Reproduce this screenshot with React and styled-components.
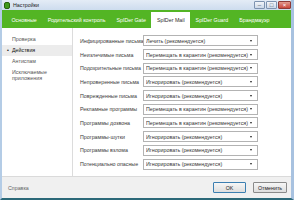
import React from "react";
import styled, { createGlobalStyle } from "styled-components";

const GlobalStyle = createGlobalStyle`
    html, body {
        margin: 0;
        padding: 0;
        background: #1f5c6e;
    }
    body {
        font-family: "Liberation Sans", Arial, sans-serif;
    }
`;

const FS = "5.3px";

const Window = styled.div`
    box-sizing: border-box;
    width: 294px;
    height: 200px;
    display: flex;
    flex-direction: column;
    background: #c4d7ec;
    border-left: 2px solid #b4cce6;
    border-right: 3px solid #a8c2e0;
    border-bottom: 2px solid #2b6878;
    overflow: hidden;
`;

const TitleBar = styled.div`
    height: 10px;
    display: flex;
    align-items: center;
    background: linear-gradient(#e4ecf6, #cddcee);
    padding-left: 2px;
    font-size: ${FS};
    color: #1a1a1a;

    .title {
        margin-left: 3px;
        flex: 1;
    }
`;

const AppIcon = styled.div`
    width: 6px;
    height: 7px;
    border-radius: 2px;
    background: #3f9a1c;
    border: 1px solid #27620f;
    box-sizing: border-box;
`;

const WinButtons = styled.div`
    display: flex;
    gap: 1px;
    align-self: flex-start;
    margin-top: 1px;
`;

const WinBtn = styled.div`
    width: ${(p) => (p.$close ? "13px" : "11px")};
    height: 8px;
    box-sizing: border-box;
    border: 1px solid ${(p) => (p.$close ? "#8e3a36" : "#7d93b0")};
    border-radius: 1px;
    background: ${(p) => (p.$close ? "linear-gradient(#e39b8f, #c9463b)" : "linear-gradient(#f2f5f9, #ccd8e8)")};
    display: flex;
    align-items: center;
    justify-content: center;
    color: ${(p) => (p.$close ? "#fff" : "#3a4a60")};
    font-size: 6px;
    line-height: 1;
`;

const TabBar = styled.div`
    height: 18px;
    display: flex;
    align-items: flex-end;
    background: #53b524;
    padding-left: 4px;
`;

const Tab = styled.div`
    height: 16px;
    display: flex;
    align-items: center;
    padding: 0 5.5px;
    font-size: ${FS};
    color: ${(p) => (p.$active ? "#2c2c2c" : "#ffffff")};
    background: ${(p) => (p.$active ? "#ffffff" : "transparent")};
    white-space: nowrap;
`;

const Body = styled.div`
    flex: 1;
    display: flex;
    background: #ffffff;
    border-bottom: 1px solid #dadada;
    min-height: 0;
`;

const Sidebar = styled.div`
    width: 70px;
    border-right: 1px solid #dcdcdc;
    padding-top: 6px;
    display: flex;
    flex-direction: column;
`;

const NavItem = styled.div`
    position: relative;
    font-size: ${FS};
    line-height: 5.6px;
    padding: 2.8px 4px 2.8px 10px;
    color: ${(p) => (p.$active ? "#111" : "#555")};
    background: ${(p) => (p.$active ? "#ececec" : "transparent")};

    &::before {
        content: "${(p) => (p.$active ? "•" : "")}";
        position: absolute;
        left: 5px;
        top: 2.8px;
        color: #111;
    }
`;

const Main = styled.div`
    flex: 1;
    padding: 6px 0 0 7px;
    display: flex;
    flex-direction: column;
`;

const Row = styled.div`
    height: 13.7px;
    display: flex;
    align-items: center;
`;

const Label = styled.div`
    width: 63px;
    font-size: ${FS};
    color: #3a3a3a;
    white-space: nowrap;
`;

const Select = styled.div`
    box-sizing: border-box;
    width: 115px;
    height: 11px;
    border: 1px solid #b3b3b3;
    background: #ffffff;
    display: flex;
    align-items: center;
    padding: 0 2px;
    font-size: ${FS};
    color: #333;
    white-space: nowrap;

    .val {
        flex: 1;
        overflow: hidden;
    }
`;

const Arrow = styled.div`
    width: 0;
    height: 0;
    margin-right: 3px;
    border-left: 1.5px solid transparent;
    border-right: 1.5px solid transparent;
    border-top: 2px solid #222;
`;

const Footer = styled.div`
    height: 21px;
    display: flex;
    align-items: center;
    background: #f0f0f0;
    padding: 0 4px 0 6px;
    font-size: ${FS};
    color: #666;

    .help {
        flex: 1;
    }
`;

const Button = styled.div`
    box-sizing: border-box;
    width: ${(p) => p.$w}px;
    height: 11px;
    margin-left: 7px;
    display: flex;
    align-items: center;
    justify-content: center;
    border: 1px solid ${(p) => (p.$default ? "#3c7fb1" : "#8a8a8a")};
    border-radius: 1px;
    background: linear-gradient(#f6f6f6, #dedede);
    font-size: ${FS};
    color: #222;
`;

const tabs = ["Основные", "Родительский контроль", "SpIDer Gate", "SpIDer Mail", "SpIDer Guard", "Брандмауэр"];

const nav = ["Проверка", "Действия", "Антиспам", "Исключаемые приложения"];

const QUAR = "Перемещать в карантин (рекомендуется)";
const IGN = "Игнорировать (рекомендуется)";

const rows = [
    ["Инфицированные письма", "Лечить (рекомендуется)"],
    ["Неизлечимые письма", QUAR],
    ["Подозрительные письма", QUAR],
    ["Непроверенные письма", IGN],
    ["Поврежденные письма", IGN],
    ["Рекламные программы", QUAR],
    ["Программы дозвона", QUAR],
    ["Программы-шутки", IGN],
    ["Программы взлома", IGN],
    ["Потенциально опасные", IGN],
];

export default function App() {
    return (
        <>
            <GlobalStyle />
            <Window>
                <TitleBar>
                    <AppIcon />
                    <span className="title">Настройки</span>
                    <WinButtons>
                        <WinBtn>–</WinBtn>
                        <WinBtn>□</WinBtn>
                        <WinBtn $close>×</WinBtn>
                    </WinButtons>
                </TitleBar>
                <TabBar>
                    {tabs.map((t) => (
                        <Tab key={t} $active={t === "SpIDer Mail"}>
                            {t}
                        </Tab>
                    ))}
                </TabBar>
                <Body>
                    <Sidebar>
                        {nav.map((n) => (
                            <NavItem key={n} $active={n === "Действия"}>
                                {n === "Исключаемые приложения" ? (
                                    <>
                                        Исключаемые
                                        <br />
                                        приложения
                                    </>
                                ) : (
                                    n
                                )}
                            </NavItem>
                        ))}
                    </Sidebar>
                    <Main>
                        {rows.map(([label, value]) => (
                            <Row key={label}>
                                <Label>{label}</Label>
                                <Select>
                                    <span className="val">{value}</span>
                                    <Arrow />
                                </Select>
                            </Row>
                        ))}
                    </Main>
                </Body>
                <Footer>
                    <span className="help">Справка</span>
                    <Button $w={33} $default>OK</Button>
                    <Button $w={34}>Отменить</Button>
                </Footer>
            </Window>
        </>
    );
}
